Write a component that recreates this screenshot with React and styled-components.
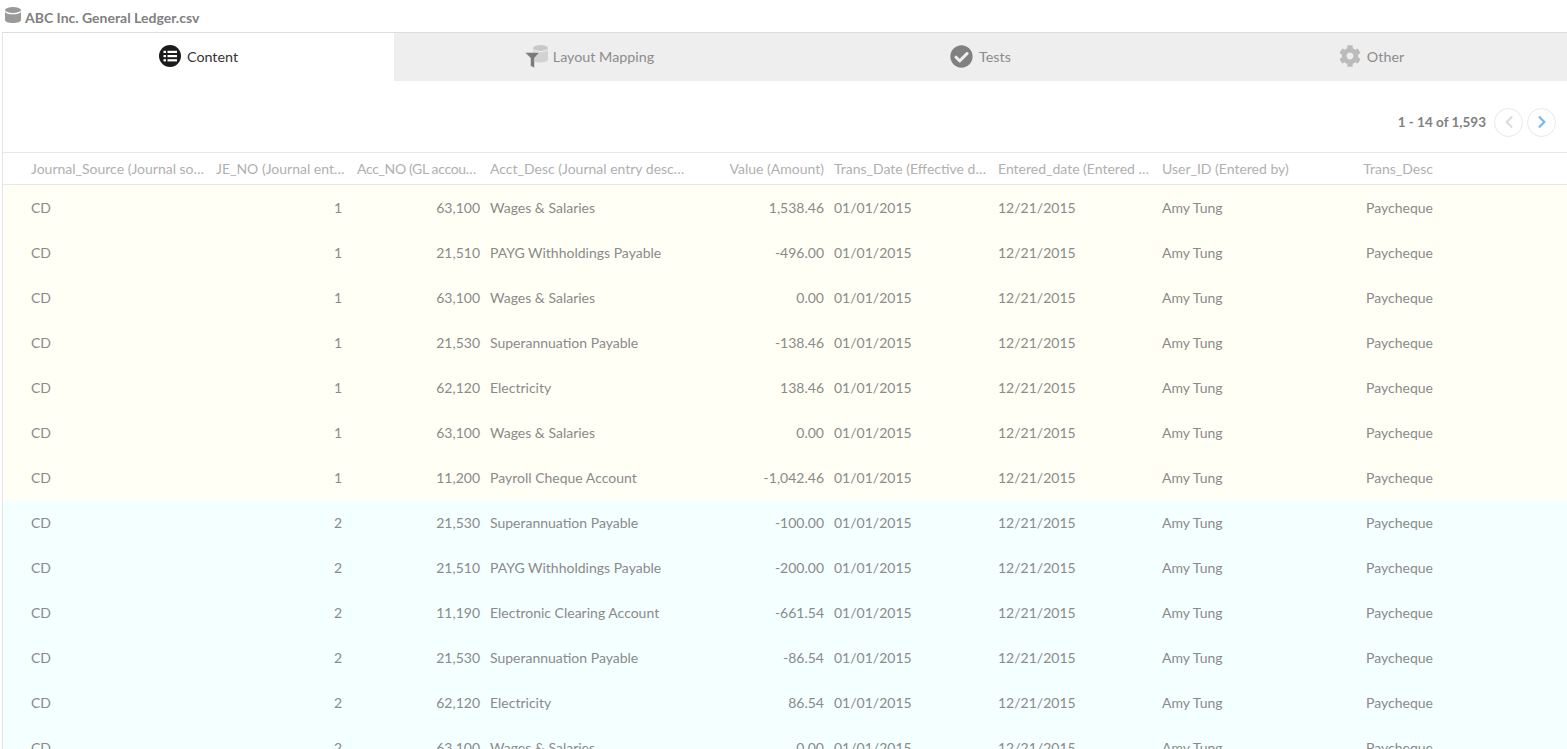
import React from 'react';
import styled, { createGlobalStyle } from 'styled-components';
import { FaCheckCircle, FaChevronLeft, FaChevronRight, FaCog } from 'react-icons/fa';

const GlobalStyle = createGlobalStyle`
  html, body {
    margin: 0;
    height: 100%;
    overflow: hidden;
    background: #fff;
    font-family: Lato, "Open Sans", sans-serif;
  }
`;

const Page = styled.div`
  height: 749px;
  overflow: hidden;
  padding-left: 2px;
  display: flex;
  flex-direction: column;
`;

const Title = styled.div`
  height: 32px;
  flex: none;
  margin-left: -2px;
  padding: 3px 0 0 5px;
  display: flex;
  align-items: center;
  gap: 4px;
  box-sizing: border-box;
  font-size: 14px;
  font-weight: 700;
  color: #808080;
  svg {
    margin-top: -5px;
  }
`;

const Panel = styled.div`
  flex: 1;
  min-height: 0;
  border-left: 1px solid #e4e4e4;
  display: flex;
  flex-direction: column;
`;

const Tabs = styled.div`
  height: 49px;
  flex: none;
  box-sizing: border-box;
  border-top: 1px solid #ddd;
  display: grid;
  grid-template-columns: repeat(4, 1fr);
`;

const Tab = styled.div`
  padding-bottom: 2px;
  display: flex;
  align-items: center;
  justify-content: center;
  gap: ${(p) => (p.$tight ? '4px' : '6px')};
  font-size: 14.3px;
  background: ${(p) => (p.$active ? '#fff' : '#eee')};
  color: ${(p) => (p.$active ? '#333' : '#8c8c8c')};
  svg {
    flex: none;
    color: ${(p) => p.$iconColor || '#808080'};
  }
`;

const Toolbar = styled.div`
  height: 71px;
  flex: none;
  box-sizing: border-box;
  padding: 11px 11px 0 0;
  display: flex;
  align-items: center;
  justify-content: flex-end;
  gap: 4px;
`;

const PageInfo = styled.span`
  font-size: 13.5px;
  font-weight: 700;
  color: #808080;
  margin-right: 4px;
`;

const PageButton = styled.button`
  width: 29px;
  height: 29px;
  padding: 0;
  border: 1px solid #e8e8e8;
  border-radius: 50%;
  background: #fff;
  display: flex;
  align-items: center;
  justify-content: center;
  color: ${(p) => (p.$disabled ? '#dcdcdc' : '#74b9f0')};
  svg {
    width: 14px;
    height: 14px;
  }
`;

const Grid = styled.div`
  border-top: 1px solid #e8e8e8;
`;

const columns = '23px 185px 136px 138px 204px 140px 164px 164px 200px 81px 1fr';

const HeaderRow = styled.div`
  height: 31px;
  display: grid;
  grid-template-columns: ${columns};
  align-items: center;
  font-size: 14px;
  color: #b0b0b0;
  border-bottom: 1px solid #e8e8e8;
`;

const Row = styled.div`
  height: 45px;
  display: grid;
  grid-template-columns: ${columns};
  align-items: center;
  font-size: 14px;
  color: #8a8a8a;
  background: ${(p) => (p.$group === 1 ? '#fffff6' : '#f4ffff')};
`;

const Cell = styled.div`
  padding: 0 5px;
  text-align: ${(p) => (p.$right ? 'right' : 'left')};
  white-space: nowrap;
  overflow: hidden;
  text-overflow: ellipsis;
`;

const HeaderCell = styled(Cell)`
  padding-right: ${(p) => (p.$right ? '5px' : '2px')};
  padding-left: ${(p) => (p.$narrow ? '10px' : '5px')};
  letter-spacing: ${(p) => (p.$narrow ? '-0.35px' : 'normal')};
`;

const FileIcon = () => (
  <svg width="16" height="16" viewBox="0 0 16 16" fill="#999">
    <ellipse cx="8" cy="3" rx="8" ry="3" />
    <path d="M0 5c1 1.500 4 2.300 8 2.300S15 6.500 16 5v8c0 1.700-3.500 3-8 3s-8-1.300-8-3z" />
  </svg>
);

const ContentIcon = () => (
  <svg width="22" height="22" viewBox="0 0 22 22">
    <circle cx="11" cy="11" r="11" fill="#1b1b1b" />
    <g fill="#fff">
      <rect x="4.500" y="5.800" width="2.500" height="2.200" />
      <rect x="8.500" y="5.800" width="9.500" height="2.200" />
      <rect x="4.500" y="10" width="2.500" height="2.200" />
      <rect x="8.500" y="10" width="9.500" height="2.200" />
      <rect x="4.500" y="14.200" width="2.500" height="2.200" />
      <rect x="8.500" y="14.200" width="9.500" height="2.200" />
    </g>
  </svg>
);

const MappingIcon = () => (
  <svg width="24" height="23" viewBox="0 0 24 23">
    <ellipse cx="15.500" cy="3" rx="7.500" ry="3" fill="#c8c8c8" />
    <path d="M8 4v10.500c0 1.700 3.400 3 7.500 3s7.500-1.300 7.500-3V4c0 1.700-3.400 3-7.500 3S8 5.700 8 4z" fill="#d2d2d2" />
    <path d="M0 7.500h14.500L9.500 13v10l-4-2v-8z" fill="#7a7a7a" stroke="#eee" strokeWidth="0.5" />
  </svg>
);

const headers = [
  { label: 'Journal_Source (Journal source)' },
  { label: 'JE_NO (Journal entry number)' },
  { label: 'Acc_NO (GL account number)', right: true, narrow: true },
  { label: 'Acct_Desc (Journal entry description)' },
  { label: 'Value (Amount)', right: true },
  { label: 'Trans_Date (Effective date)' },
  { label: 'Entered_date (Entered date)' },
  { label: 'User_ID (Entered by)' },
  { label: 'Trans_Desc', right: true },
];

const rows = [
  [1, 1, '63,100', 'Wages & Salaries', '1,538.46'],
  [1, 1, '21,510', 'PAYG Withholdings Payable', '-496.00'],
  [1, 1, '63,100', 'Wages & Salaries', '0.00'],
  [1, 1, '21,530', 'Superannuation Payable', '-138.46'],
  [1, 1, '62,120', 'Electricity', '138.46'],
  [1, 1, '63,100', 'Wages & Salaries', '0.00'],
  [1, 1, '11,200', 'Payroll Cheque Account', '-1,042.46'],
  [2, 2, '21,530', 'Superannuation Payable', '-100.00'],
  [2, 2, '21,510', 'PAYG Withholdings Payable', '-200.00'],
  [2, 2, '11,190', 'Electronic Clearing Account', '-661.54'],
  [2, 2, '21,530', 'Superannuation Payable', '-86.54'],
  [2, 2, '62,120', 'Electricity', '86.54'],
  [2, 2, '63,100', 'Wages & Salaries', '0.00'],
];

export default function App() {
  return (
    <Page>
      <GlobalStyle />
      <Title>
        <FileIcon />
        ABC Inc. General Ledger.csv
      </Title>
      <Panel>
        <Tabs>
          <Tab $active><ContentIcon />Content</Tab>
          <Tab $tight><MappingIcon />Layout Mapping</Tab>
          <Tab><FaCheckCircle size={23} />Tests</Tab>
          <Tab $iconColor="#bbb"><FaCog size={22} />Other</Tab>
        </Tabs>
        <Toolbar>
          <PageInfo>1 - 14 of 1,593</PageInfo>
          <PageButton $disabled><FaChevronLeft /></PageButton>
          <PageButton><FaChevronRight /></PageButton>
        </Toolbar>
        <Grid>
          <HeaderRow>
            <span />
            {headers.map((h) => (
              <HeaderCell key={h.label} $right={h.right} $narrow={h.narrow}>{h.label}</HeaderCell>
            ))}
          </HeaderRow>
          {rows.map((r, i) => (
            <Row key={i} $group={r[0]}>
              <span />
              <Cell>CD</Cell>
              <Cell $right>{r[1]}</Cell>
              <Cell $right>{r[2]}</Cell>
              <Cell>{r[3]}</Cell>
              <Cell $right>{r[4]}</Cell>
              <Cell>01/01/2015</Cell>
              <Cell>12/21/2015</Cell>
              <Cell>Amy Tung</Cell>
              <Cell $right>Paycheque</Cell>
            </Row>
          ))}
        </Grid>
      </Panel>
    </Page>
  );
}
